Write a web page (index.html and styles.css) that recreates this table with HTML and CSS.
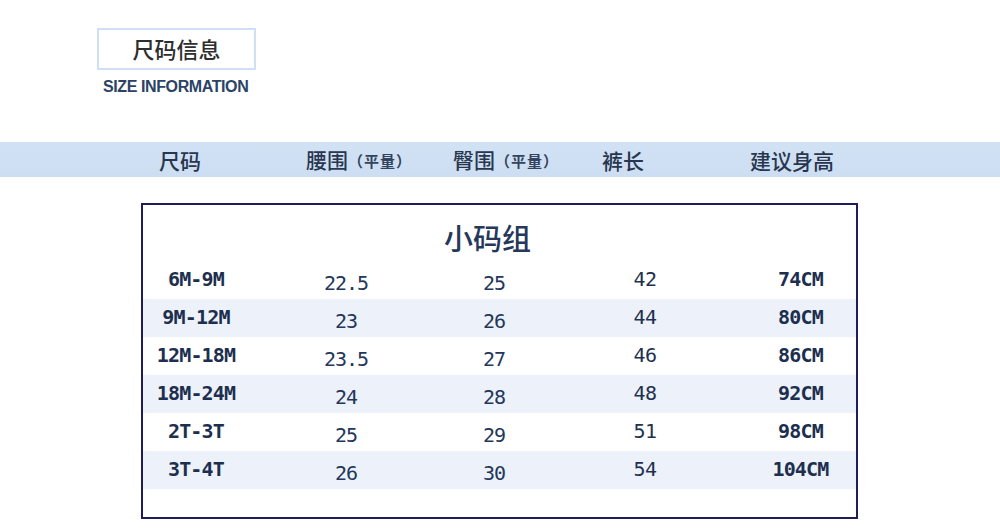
FILE: index.html
```html
<!DOCTYPE html>
<html lang="zh-CN">
<head>
<meta charset="utf-8">
<title>尺码信息</title>
<link rel="stylesheet" href="styles.css">
</head>
<body>
<div class="page">
  <header class="title-block">
    <div class="title-box">尺码信息</div>
    <div class="title-en">SIZE INFORMATION</div>
  </header>

  <div class="head-band">
    <span class="hcell">尺码</span>
    <span class="hcell">腰围<small>（平量）</small></span>
    <span class="hcell">臀围<small>（平量）</small></span>
    <span class="hcell">裤长</span>
    <span class="hcell">建议身高</span>
  </div>

  <section class="size-table">
    <h2 class="group-title">小码组</h2>
    <div class="row">
      <span class="c1">6M-9M</span><span class="c2">22.5</span><span class="c3">25</span><span class="c4">42</span><span class="c5">74CM</span>
    </div>
    <div class="row alt">
      <span class="c1">9M-12M</span><span class="c2">23</span><span class="c3">26</span><span class="c4">44</span><span class="c5">80CM</span>
    </div>
    <div class="row">
      <span class="c1">12M-18M</span><span class="c2">23.5</span><span class="c3">27</span><span class="c4">46</span><span class="c5">86CM</span>
    </div>
    <div class="row alt">
      <span class="c1">18M-24M</span><span class="c2">24</span><span class="c3">28</span><span class="c4">48</span><span class="c5">92CM</span>
    </div>
    <div class="row">
      <span class="c1">2T-3T</span><span class="c2">25</span><span class="c3">29</span><span class="c4">51</span><span class="c5">98CM</span>
    </div>
    <div class="row alt">
      <span class="c1">3T-4T</span><span class="c2">26</span><span class="c3">30</span><span class="c4">54</span><span class="c5">104CM</span>
    </div>
  </section>
</div>
</body>
</html>
```

FILE: styles.css
```css
* { box-sizing: border-box; }

html, body {
  margin: 0;
  padding: 0;
  background: #ffffff;
}

body {
  font-family: "Noto Sans CJK SC", "Noto Sans", sans-serif;
  color: #1f3150;
}

.page {
  width: 1000px;
  height: 529px;
  overflow: hidden;
}

/* ---------- title block ---------- */
.title-block {
  padding-top: 28px;
  padding-left: 97px;
}

.title-box {
  width: 159px;
  height: 42px;
  border: 2px solid #cfdff4;
  display: flex;
  align-items: center;
  justify-content: center;
  font-size: 22px;
  font-weight: 500;
  color: #2e2e2e;
  line-height: 1;
  padding-bottom: 2px;
}

.title-en {
  margin-top: 8px;
  padding-left: 6px;
  height: 18px;
  line-height: 18px;
  font-family: "Liberation Sans", Arial, sans-serif;
  font-weight: bold;
  font-size: 16px;
  letter-spacing: -0.4px;
  color: #2a4366;
}

/* ---------- header band ---------- */
.head-band {
  margin-top: 46px;
  height: 35px;
  background: linear-gradient(180deg, #d2e2f5 0%, #cddef2 100%);
  display: grid;
  grid-template-columns: 147px 147px 149px 148px auto;
  padding-left: 159px;
  align-items: center;
}

.hcell {
  font-size: 21px;
  font-weight: 500;
  line-height: 35px;
  color: #28364f;
  white-space: nowrap;
}

.hcell small {
  display: inline-block;
  font-size: 15px;
  font-weight: bold;
  color: #34445e;
  letter-spacing: 1px;
  vertical-align: 1px;
}

/* ---------- size table ---------- */
.size-table {
  margin-top: 26px;
  margin-left: 141px;
  width: 717px;
  height: 316px;
  border: 2px solid #1f1c5c;
}

.group-title {
  margin: 0;
  padding-top: 8px;
  padding-right: 24px;
  height: 56px;
  line-height: 48px;
  text-align: center;
  font-size: 29px;
  font-weight: 500;
  color: #25385a;
}

.row {
  display: grid;
  grid-template-columns: 106px 194px 102px 200px 111px;
  height: 38px;
  align-items: center;
  text-align: center;
  font-family: "DejaVu Sans Mono", "Liberation Mono", monospace;
  font-size: 20px;
  color: #1f3150;
}

.row.alt {
  background: #edf2fa;
}

.c1, .c5 {
  font-weight: bold;
  letter-spacing: -0.8px;
  padding-bottom: 2px;
  color: #1d2f4f;
}

.c2, .c3 {
  padding-top: 5px;
  letter-spacing: -1px;
  color: #24375a;
}

.c4 {
  padding-bottom: 2px;
  letter-spacing: -0.5px;
  color: #1f3150;
}
```
